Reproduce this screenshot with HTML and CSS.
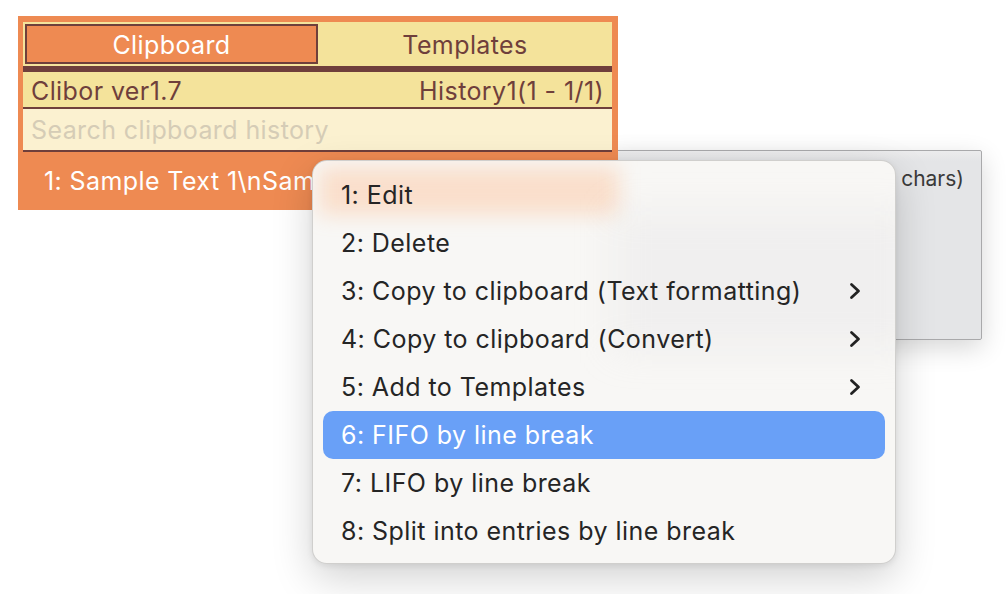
FILE: index.html
```html
<!DOCTYPE html>
<html>
<head>
<meta charset="utf-8">
<link rel="stylesheet" href="styles.css">
</head>
<body>
<div class="desk">
  <div class="tip">
    <div class="tip-line">(27 chars)</div>
  </div>
  <div class="panel">
    <div class="tabs">
      <div class="tab active">Clipboard</div>
      <div class="tab">Templates</div>
    </div>
    <div class="info">
      <span>Clibor ver1.7</span>
      <span>History1(1 - 1/1)</span>
    </div>
    <div class="search">Search clipboard history</div>
    <div class="row"><span class="row-text">1: Sample Text 1\nSam</span></div>
  </div>
  <div class="menu">
    <div class="glow"></div>
    <div class="haze"></div>
    <div class="item">1: Edit</div>
    <div class="item">2: Delete</div>
    <div class="item sub">3: Copy to clipboard (Text formatting)<svg class="chev" width="12" height="18" viewBox="0 0 12 18"><polyline points="2.5,2.5 9.5,9 2.5,15.5" /></svg></div>
    <div class="item sub">4: Copy to clipboard (Convert)<svg class="chev" width="12" height="18" viewBox="0 0 12 18"><polyline points="2.5,2.5 9.5,9 2.5,15.5" /></svg></div>
    <div class="item sub">5: Add to Templates<svg class="chev" width="12" height="18" viewBox="0 0 12 18"><polyline points="2.5,2.5 9.5,9 2.5,15.5" /></svg></div>
    <div class="item hl">6: FIFO by line break</div>
    <div class="item">7: LIFO by line break</div>
    <div class="item">8: Split into entries by line break</div>
  </div>
</div>
</body>
</html>
```
FILE: styles.css
```css
html, body {
  margin: 0;
  padding: 0;
  background: #ffffff;
}
body {
  font-family: Inter, "Noto Sans", sans-serif;
  width: 1008px;
  height: 594px;
  overflow: hidden;
}
.desk {
  position: relative;
  width: 1008px;
  height: 594px;
}
.panel {
  position: absolute;
  left: 18px;
  top: 16px;
  width: 600px;
  height: 194px;
  box-sizing: border-box;
  background: #ee8a52;
  padding: 6px 6px 0 5px;
  display: flex;
  flex-direction: column;
  z-index: 2;
  font-size: 25px;
  letter-spacing: 0.4px;
}
.tabs {
  display: flex;
  box-sizing: border-box;
  padding: 2px 0 2px 2px;
  background: #f4e39b;
  border-bottom: 6px solid #6f3f3b;
  height: 50px;
}
.tab {
  flex: 1;
  display: flex;
  align-items: center;
  justify-content: center;
  padding-top: 2px;
  color: #6f3f3b;
}
.tab.active {
  flex: 0 0 293px;
  box-sizing: border-box;
  border: 2px solid #6f3f3b;
  background: #ee8a52;
  color: #ffffff;
}
.info {
  height: 37px;
  box-sizing: border-box;
  background: #f4e39b;
  border-bottom: 2px solid #6f3f3b;
  display: flex;
  align-items: center;
  justify-content: space-between;
  padding: 2px 8px 0 8px;
  color: #6f3f3b;
}
.search {
  height: 43px;
  box-sizing: border-box;
  background: #fbf1d0;
  border-bottom: 2px solid #6f3f3b;
  display: flex;
  align-items: center;
  padding: 0 8px;
  color: #d5ccb6;
}
.row {
  flex: 1;
  display: flex;
  align-items: center;
  padding: 0 0 0 21px;
  color: #ffffff;
}
.row-text {
  white-space: nowrap;
}
.tip {
  position: absolute;
  left: 610px;
  top: 150px;
  width: 372px;
  height: 190px;
  box-sizing: border-box;
  background: linear-gradient(#ececed 0, #e4e5e7 10px, #e4e5e7 100%);
  border: 1px solid #a9a9ab;
  border-radius: 2px;
  box-shadow: 0 8px 26px rgba(0, 0, 0, 0.16);
  padding: 15px 17px 0 16px;
  z-index: 1;
  color: #3a3a3a;
  font-size: 21px;
}
.tip-line {
  text-align: right;
  white-space: nowrap;
}
.menu {
  position: absolute;
  left: 312px;
  top: 160px;
  width: 584px;
  height: 404px;
  box-sizing: border-box;
  padding: 10px;
  border-radius: 15px;
  background: #f8f7f5;
  border: 1px solid rgba(0, 0, 0, 0.16);
  box-shadow: 0 14px 40px rgba(0, 0, 0, 0.18), 0 2px 6px rgba(0, 0, 0, 0.08);
  z-index: 3;
  overflow: hidden;
}
.glow {
  position: absolute;
  left: 6px;
  top: 6px;
  width: 300px;
  height: 48px;
  background: rgba(255, 170, 110, 0.3);
  filter: blur(10px);
}
.haze {
  position: absolute;
  left: 300px;
  top: 50px;
  width: 300px;
  height: 140px;
  background: rgba(215, 215, 218, 0.22);
  filter: blur(18px);
}
.item {
  position: relative;
  height: 48px;
  box-sizing: border-box;
  display: flex;
  align-items: center;
  justify-content: space-between;
  padding: 0 24px 0 18px;
  border-radius: 10px;
  font-size: 25px;
  letter-spacing: 0.45px;
  color: #252525;
  white-space: nowrap;
}
.item.hl {
  background: #69a0f7;
  color: #ffffff;
}
.chev polyline {
  fill: none;
  stroke: #222222;
  stroke-width: 2.8;
  stroke-linecap: round;
  stroke-linejoin: round;
}
```
